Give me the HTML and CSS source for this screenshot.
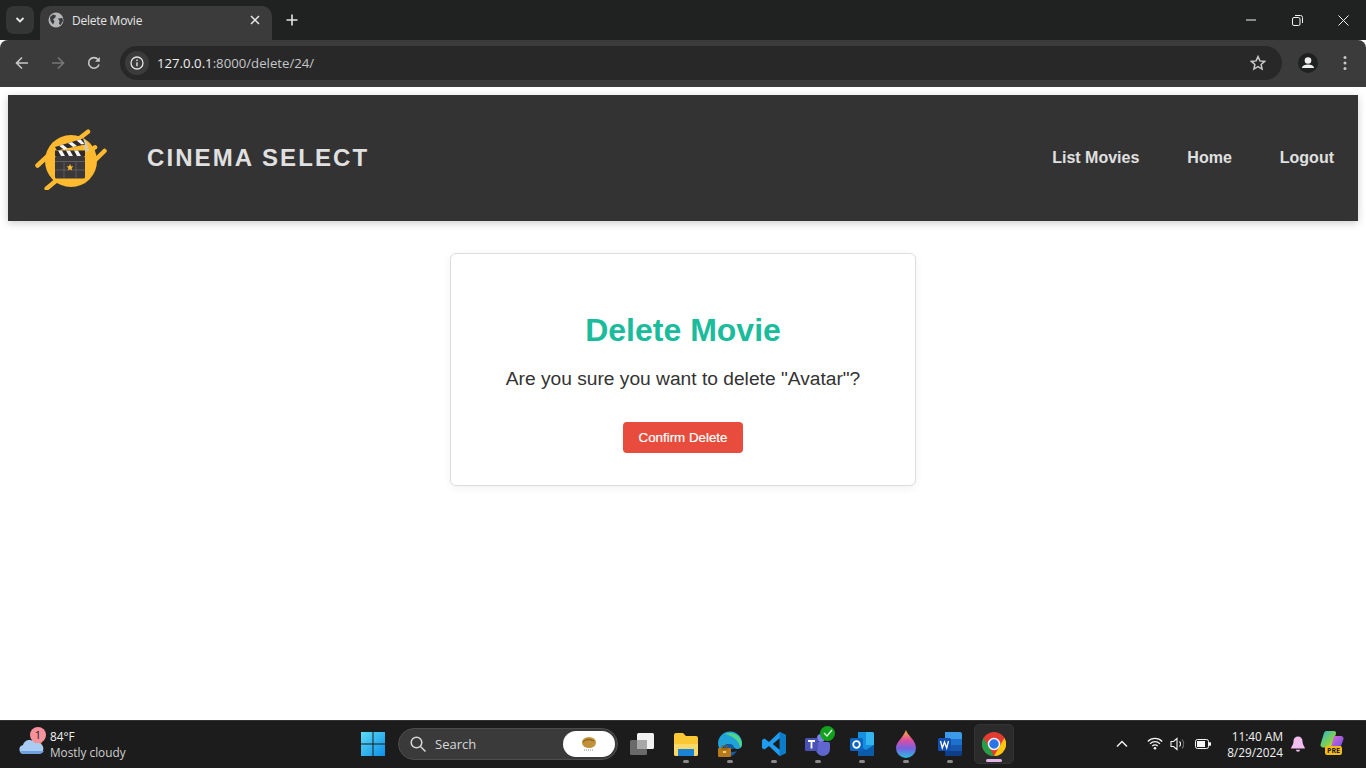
FILE: index.html
```html
<!DOCTYPE html>
<html lang="en">
<head>
<meta charset="utf-8">
<title>Delete Movie</title>
<link rel="stylesheet" href="styles.css">
</head>
<body>
<div class="tabstrip">
  <div class="tab-search"><svg width="10" height="6" viewBox="0 0 10 6"><path d="M1.500 1l3.500 3.500L8.500 1" fill="none" stroke="#e8e8e8" stroke-width="1.800"/></svg></div>
  <div class="tab">
    <svg class="favicon" width="16" height="16" viewBox="0 0 16 16"><circle cx="8" cy="8" r="7.500" fill="#b4b6b8"/><path d="M2 5l3-2.500 3 1-1 2.500-2 1 1.500 2.500L5 12.500 2.500 9zM10 6.500l4.500-.5.500 3-2.500 4-1.500-1 .5-3z" fill="#3b3b3b"/></svg>
    <span class="tab-title">Delete Movie</span>
    <svg class="tab-close" width="10" height="10" viewBox="0 0 10 10"><path d="M1 1l8 8M9 1l-8 8" stroke="#e8e8e8" stroke-width="1.500"/></svg>
  </div>
  <svg class="new-tab" width="12" height="12" viewBox="0 0 12 12"><path d="M6 .5v11M.5 6h11" stroke="#e4e4e4" stroke-width="1.600"/></svg>
  <div class="window-controls">
    <svg width="10" height="2" viewBox="0 0 10 2"><path d="M0 1h10" stroke="#f2f2f2"/></svg>
    <svg width="11" height="11" viewBox="0 0 11 11"><rect x=".5" y="2.500" width="7.500" height="8" rx="1.500" fill="none" stroke="#f2f2f2"/><path d="M3 .5h5.500a2 2 0 0 1 2 2V8" fill="none" stroke="#f2f2f2"/></svg>
    <svg width="11" height="11" viewBox="0 0 11 11"><path d="M.5.500l10 10M10.500.5l-10 10" stroke="#f2f2f2"/></svg>
  </div>
</div>
<div class="toolbar">
  <div class="nav-icons">
    <svg width="14" height="14" viewBox="0 0 14 14"><path d="M13 7H2M7 1.500L1.500 7 7 12.500" fill="none" stroke="#c8c8c8" stroke-width="1.600"/></svg>
    <svg width="14" height="14" viewBox="0 0 14 14"><path d="M1 7h11M7 1.500L12.500 7 7 12.500" fill="none" stroke="#777" stroke-width="1.600"/></svg>
    <svg width="14" height="14" viewBox="0 0 14 14"><path d="M12 8.500A5.300 5.300 0 1 1 11 3.500" fill="none" stroke="#c8c8c8" stroke-width="1.600"/><path d="M12.800 1v4.800H8z" fill="#c8c8c8"/></svg>
  </div>
  <div class="omnibox">
    <div class="site-info"><svg width="14" height="14" viewBox="0 0 14 14"><circle cx="7" cy="7" r="6" fill="none" stroke="#e3e3e3" stroke-width="1.300"/><path d="M7 6.200v4M7 3.600v1.400" stroke="#e3e3e3" stroke-width="1.400"/></svg></div>
    <div class="url"><span class="url-host">127.0.0.1</span>:8000/delete/24/</div>
    <svg class="star" width="16" height="16" viewBox="0 0 16 16"><path d="M8 1.600l1.900 4.300 4.700.5-3.500 3.100 1 4.600L8 11.700l-4.100 2.400 1-4.600L1.400 6.400l4.700-.5z" fill="none" stroke="#c8c8c8" stroke-width="1.500"/></svg>
  </div>
  <div class="profile"><svg width="20" height="20" viewBox="0 0 20 20"><circle cx="10" cy="10" r="10" fill="#1f2020"/><circle cx="10" cy="7.500" r="3.300" fill="#f0f0f0"/><path d="M3.800 15c.7-2.800 3.300-3.600 6.200-3.600s5.500.8 6.200 3.600z" fill="#f0f0f0"/></svg></div>
  <svg class="kebab" width="4" height="14" viewBox="0 0 4 14"><g fill="#c8c8c8"><circle cx="2" cy="1.500" r="1.500"/><circle cx="2" cy="7" r="1.500"/><circle cx="2" cy="12.500" r="1.500"/></g></svg>
</div>

<main class="viewport">
  <header class="site-header">
    <div class="brand">
      <svg class="logo" width="72" height="64" viewBox="0 0 72 64">
        <circle cx="36" cy="35" r="26" fill="#fdb92f"/>
        <g stroke="#fdb92f" stroke-width="4.500" stroke-linecap="round">
          <path d="M2.500 39.500L23 20.500M53 5.700L40 15.700M60 21.300L55 25M69.500 25L49 45M11.700 62.500L28 49"/>
        </g>
        <path d="M48 12.500l3.500 2.500 2.500 10-4 1z" fill="#d9c9a5"/>
        <rect x="20" y="30" width="30" height="22.500" rx="1.500" fill="#3a3838"/>
        <path d="M20 35.500h30" stroke="#5e5e5e" stroke-width="1"/>
        <path d="M29 36v16M41 36v16M20 44h30" stroke="#6a6a6a" stroke-width=".7"/>
        <path d="M20 24.500h30V30H20z" fill="#2d2b2b"/>
        <path d="M23 24.500l3 5.500h4l-3-5.500zM31 24.500l3 5.500h4l-3-5.500zM39 24.500l3 5.500h4l-3-5.500z" fill="#f4f4f4"/>
        <path d="M20 21l28-8.500 2 6-28 6z" fill="#2d2b2b"/>
        <path d="M24 19.800l5 3.900 4-.9-5-4zM33 17l5 3.900 4-.9-5-4zM41.500 14.500l5 3.900 3-.6-4-4.500z" fill="#f4f4f4"/>
        <path d="M35 38l1 2.300 2.500.2-1.900 1.600.6 2.400-2.200-1.300-2.200 1.300.6-2.400-1.900-1.600 2.500-.2z" fill="#fdb92f"/>
      </svg>
      <span class="brand-name">CINEMA SELECT</span>
    </div>
    <nav class="site-nav">
      <a href="#">List Movies</a>
      <a href="#">Home</a>
      <a href="#">Logout</a>
    </nav>
  </header>
  <section class="card">
    <h1>Delete Movie</h1>
    <p>Are you sure you want to delete "Avatar"?</p>
    <button type="button" class="danger">Confirm Delete</button>
  </section>
</main>

<footer class="taskbar">
  <div class="weather">
    <div class="weather-icon">
      <svg width="28" height="26" viewBox="0 0 28 26"><circle cx="19" cy="10" r="5" fill="#f08020"/><path d="M6 23a4.500 4.500 0 0 1-1-8.900A7 7 0 0 1 17.500 12a5.500 5.500 0 0 1 4 11z" fill="#a9cdf2"/><path d="M6 23a4.500 4.500 0 0 1-4-3h24a5.500 5.500 0 0 1-4.500 3z" fill="#6f9fdc"/></svg>
      <span class="badge">1</span>
    </div>
    <div class="weather-text"><div class="temp">84°F</div><div class="cond">Mostly cloudy</div></div>
  </div>
  <div class="task-center">
    <svg class="start" width="24" height="24" viewBox="0 0 24 24"><defs><linearGradient id="win" x1="0" y1="0" x2="1" y2="1"><stop offset="0" stop-color="#5fdcf5"/><stop offset="1" stop-color="#0a8fe8"/></linearGradient></defs><path d="M0 0h11.500v11.500H0zM12.500 0H24v11.500H12.500zM0 12.500h11.500V24H0zM12.500 12.500H24V24H12.500z" fill="url(#win)"/></svg>
    <div class="search">
      <svg width="16" height="16" viewBox="0 0 16 16"><circle cx="6.500" cy="6.500" r="5.300" fill="none" stroke="#d8d8d8" stroke-width="1.500"/><path d="M10.500 10.500l5 5" stroke="#d8d8d8" stroke-width="1.500"/></svg>
      <span class="search-label">Search</span>
      <div class="search-pill"><svg width="18" height="16" viewBox="0 0 18 16"><ellipse cx="9" cy="6.500" rx="7" ry="5.500" fill="#c0913a"/><path d="M3 6c3-3 7-3 11-1" stroke="#7a5518" fill="none"/><path d="M4 14h10" stroke="#888" stroke-dasharray="1 1"/></svg></div>
    </div>
    <div class="app"><svg width="24" height="22" viewBox="0 0 24 22"><rect x="0" y="7" width="17" height="15" rx="1.500" fill="#6a6a6a"/><rect x="7" y="0" width="17" height="16" rx="1.500" fill="#f1f1f1"/><rect x="7" y="7" width="10" height="9" fill="#a8a8a8"/></svg></div>
    <div class="app running"><svg width="26" height="24" viewBox="0 0 26 24"><path d="M1 3a2 2 0 0 1 2-2h7l3 3h10a2 2 0 0 1 2 2v16a2 2 0 0 1-2 2H3a2 2 0 0 1-2-2z" fill="#f9c833"/><path d="M1 12h24v10a2 2 0 0 1-2 2H3a2 2 0 0 1-2-2z" fill="#fbd968"/><path d="M5 17h16v7H5z" fill="#1a83d4"/></svg></div>
    <div class="app running"><svg width="26" height="26" viewBox="0 0 26 26"><path d="M1 12A12 12 0 0 1 25 13c0 3-2 5-5 5-4 0-3-5-8-5-5 0-8 4-6 9-3-2-5-6-5-10z" fill="#1fa3d8"/><path d="M8 3a12 12 0 0 1 17 10c0 2-1 3-2 4 0-6-6-12-15-14z" fill="#4fd68a"/><path d="M13 25c-4 0-7-2-7-6 0-4 3-6 6-6s5 2 5 5h-6c0 3 5 4 9 2-2 3-4 5-7 5z" fill="#0f5ca8"/><rect x="1" y="17" width="13" height="9" rx="1" fill="#b8791a"/><rect x="5" y="15" width="5" height="3" fill="none" stroke="#8a5a10"/><rect x="6" y="20" width="3" height="2" fill="#f5d27a"/></svg></div>
    <div class="app running"><svg width="24" height="24" viewBox="0 0 24 24"><path d="M17.500 0L24 3v18l-6.500 3L7 14l-4.500 3.500L0 16V8l2.500-1.500L7 10zM17.500 6.500L11 12l6.500 5.500z" fill="#1f9cf0"/><path d="M17.500 0L24 3v18l-6.500 3z" fill="#0a7cc8"/><path d="M17.500 6.500v11L11 12z" fill="#1c1c1c"/></svg></div>
    <div class="app running">
      <svg width="26" height="24" viewBox="0 0 26 24"><circle cx="16" cy="6" r="4" fill="#7b83eb"/><path d="M9 10h14a2 2 0 0 1 2 2v5a7 7 0 0 1-14 0z" fill="#5f66cf"/><rect x="0" y="6" width="13" height="13" rx="1.500" fill="#4b52b5"/><path d="M3 9h7M6.500 9v7.500" stroke="#fff" stroke-width="1.800"/></svg>
      <span class="check"><svg width="10" height="8" viewBox="0 0 10 8"><path d="M1 4l3 3 5-6" fill="none" stroke="#dff5df" stroke-width="1.400"/></svg></span>
    </div>
    <div class="app running"><svg width="24" height="24" viewBox="0 0 24 24"><path d="M8 0h14a2 2 0 0 1 2 2v20a2 2 0 0 1-2 2H8z" fill="#1490df"/><path d="M16 0h6a2 2 0 0 1 2 2v5h-8zM16 7h8v6h-8z" fill="#33b5f0"/><path d="M8 13l8 5 8-5v9a2 2 0 0 1-2 2H8z" fill="#0a5ca8"/><rect x="0" y="6" width="13" height="13" rx="1.500" fill="#0a64c2"/><circle cx="6.500" cy="12.500" r="3.300" fill="none" stroke="#fff" stroke-width="1.800"/></svg></div>
    <div class="app running"><svg width="22" height="28" viewBox="0 0 22 28"><defs><linearGradient id="drop" x1="0" y1="0" x2="0" y2="1"><stop offset="0" stop-color="#f7b733"/><stop offset=".35" stop-color="#e04f9e"/><stop offset=".65" stop-color="#7a5fe0"/><stop offset="1" stop-color="#27c0e0"/></linearGradient></defs><path d="M11 0c1 5 10 10 10 18a10 10 0 0 1-20 0C1 12 8 8 11 0z" fill="url(#drop)"/></svg></div>
    <div class="app running"><svg width="24" height="24" viewBox="0 0 24 24"><path d="M7 0h15a2 2 0 0 1 2 2v5H7z" fill="#3c9be8"/><path d="M7 7h17v6H7z" fill="#1f72cc"/><path d="M7 13h17v6H7z" fill="#1658ad"/><path d="M7 19h17v3a2 2 0 0 1-2 2H7z" fill="#0f3d87"/><rect x="0" y="6" width="13" height="13" rx="1.500" fill="#114fb0"/><path d="M2.500 9l1.800 7 2.200-6 2.200 6 1.800-7" fill="none" stroke="#fff" stroke-width="1.300"/></svg></div>
    <div class="app active"><svg width="24" height="24" viewBox="0 0 24 24"><circle cx="12" cy="12" r="12" fill="#e23c30"/><path d="M12 24A12 12 0 0 1 1.600 6l6 10.500z" fill="#21a04a"/><path d="M12 24l6.400-11 4-7A12 12 0 0 1 12 24z" fill="#fbc70c"/><circle cx="12" cy="12" r="5.500" fill="#2a75e8" stroke="#f4f4f4" stroke-width="1.500"/></svg></div>
  </div>
  <div class="tray">
    <svg class="tray-caret" width="12" height="8" viewBox="0 0 12 8"><path d="M1 6.500l5-5 5 5" fill="none" stroke="#f0f0f0" stroke-width="1.500"/></svg>
    <svg class="tray-wifi" width="16" height="13" viewBox="0 0 16 13"><g fill="none" stroke="#f4f4f4" stroke-width="1.200"><path d="M.8 4.500a10 10 0 0 1 14.400 0M3 6.800a7 7 0 0 1 10 0M5.300 9a3.700 3.700 0 0 1 5.400 0"/></g><circle cx="8" cy="11.300" r="1.300" fill="#f4f4f4"/></svg>
    <svg class="tray-vol" width="16" height="14" viewBox="0 0 16 14"><path d="M1 4.500h2.500L7 1.500v11l-3.500-3H1z" fill="none" stroke="#f4f4f4" stroke-width="1.100"/><path d="M9.500 4.500a3.500 3.500 0 0 1 0 5" fill="none" stroke="#f4f4f4" stroke-width="1.100"/><path d="M12 2.500a7 7 0 0 1 0 9" fill="none" stroke="#777" stroke-width="1.100"/></svg>
    <svg class="tray-batt" width="16" height="10" viewBox="0 0 16 10"><rect x=".5" y=".5" width="13" height="9" rx="2" fill="none" stroke="#f4f4f4"/><rect x="2" y="2" width="8" height="6" fill="#f4f4f4"/><rect x="14" y="3" width="2" height="4" rx="1" fill="#f4f4f4"/></svg>
    <div class="clock"><div>11:40 AM</div><div>8/29/2024</div></div>
    <svg class="tray-bell" width="14" height="16" viewBox="0 0 14 16"><path d="M7 .5a4.500 4.500 0 0 1 4.500 4.500c0 4 2.500 6 2.500 7.500H0C0 11 2.500 9 2.500 5A4.500 4.500 0 0 1 7 .5z" fill="#f3bdf0"/><path d="M5 13.800h4a2 2 0 0 1-4 0z" fill="#f3bdf0"/></svg>
    <div class="tray-copilot">
      <svg width="24" height="18" viewBox="0 0 24 18"><defs><linearGradient id="cpa" x1="0" y1="0" x2="1" y2="1"><stop offset="0" stop-color="#29b6d8"/><stop offset=".6" stop-color="#7fd14d"/><stop offset="1" stop-color="#f2d13a"/></linearGradient><linearGradient id="cpb" x1="0" y1="0" x2="1" y2="1"><stop offset="0" stop-color="#e06ad8"/><stop offset="1" stop-color="#6a4fe0"/></linearGradient></defs><path d="M7 0h7a2 2 0 0 1 2 2.500L12 15a2 2 0 0 1-2 1.500H3a2.500 2.500 0 0 1-2.500-3L4 2a3 3 0 0 1 3-2z" fill="url(#cpa)"/><path d="M14 5h7a2.500 2.500 0 0 1 2.500 3L21 15a2 2 0 0 1-2 1.500h-8z" fill="url(#cpb)"/></svg>
      <span class="pre">PRE</span>
    </div>
  </div>
</footer>
</body>
</html>
```
FILE: styles.css
```css
* { box-sizing: border-box; }
html, body { margin: 0; height: 100%; }
body {
  width: 1366px;
  height: 768px;
  overflow: hidden;
  display: flex;
  flex-direction: column;
  background: #fff;
  font-family: "Liberation Sans", Arial, sans-serif;
}
svg { display: block; flex: none; }

/* browser chrome */
.tabstrip {
  height: 40px;
  background: #202222;
  display: flex;
  align-items: flex-end;
  padding-left: 6px;
  font-family: "Open Sans", "Noto Sans", sans-serif;
}
.tab-search {
  width: 28px;
  height: 28px;
  margin: 0 6px 6px 0;
  border-radius: 8px;
  background: #343636;
  display: flex;
  align-items: center;
  justify-content: center;
}
.tab {
  width: 232px;
  height: 34px;
  background: #3b3b3b;
  border-radius: 10px 10px 0 0;
  display: flex;
  align-items: center;
  padding: 0 12px 6px 8px;
}
.tab-title {
  flex: 1;
  margin-left: 8px;
  font-size: 12px;
  color: #e4e4e4;
  letter-spacing: -.25px;
}
.new-tab { margin: 0 0 14px 14px; }
.window-controls {
  margin-left: auto;
  display: flex;
  align-items: center;
  gap: 35.5px;
  height: 40px;
  padding-right: 17px;
}
.toolbar {
  height: 47px;
  background: #3b3b3b;
  border-radius: 8px 8px 0 0;
  display: flex;
  align-items: center;
  padding: 0 19px 1px 15px;
  font-family: "Open Sans", "Noto Sans", sans-serif;
}
.nav-icons { display: flex; gap: 22px; width: 105px; }
.omnibox {
  width: 1162px;
  height: 34px;
  border-radius: 17px;
  background: #282828;
  display: flex;
  align-items: center;
  padding: 0 16px 0 5px;
}
.site-info {
  width: 24px;
  height: 24px;
  border-radius: 50%;
  background: #3b3b3b;
  display: flex;
  align-items: center;
  justify-content: center;
}
.url { flex: 1; margin-left: 8px; font-size: 13.2px; color: #c4c6c8; }
.url-host { color: #f0f0f0; }
.profile { margin-left: 16px; }
.kebab { margin-left: 25px; }

/* page */
.viewport { flex: 1; padding: 8px; background: #fff; }
.site-header {
  height: 126px;
  background: #333;
  display: flex;
  align-items: center;
  justify-content: space-between;
  padding: 0 24px 0 27px;
  box-shadow: 0 2px 8px rgba(0, 0, 0, .2);
}
.brand { display: flex; align-items: center; gap: 40px; }
.brand-name {
  font-size: 24px;
  font-weight: 700;
  letter-spacing: 2.08px;
  color: #e0e0e0;
}
.site-nav { display: flex; gap: 48px; }
.site-nav a {
  font-size: 16px;
  font-weight: 700;
  color: #e0e0e0;
  text-decoration: none;
}
.card {
  width: 466px;
  height: 233px;
  margin: 32px auto 0;
  padding: 58px 32px 32px;
  border: 1px solid #ddd;
  border-radius: 6px;
  background: #fff;
  box-shadow: 0 2px 8px rgba(0, 0, 0, .06);
  text-align: center;
}
.card h1 {
  margin: 0 0 18px;
  font-size: 32px;
  line-height: 37px;
  font-weight: 700;
  color: #1abc9c;
}
.card p {
  margin: 0 0 31px;
  font-size: 19.2px;
  line-height: 24px;
  color: #333;
}
.danger {
  border: 0;
  border-radius: 4px;
  padding: 8px 16px;
  background: #e74c3c;
  color: #fff;
  font-family: "Liberation Sans", Arial, sans-serif;
  font-size: 13.333px;
  font-weight: 400;
  -webkit-text-stroke: .2px #fff;
}

/* taskbar */
.taskbar {
  height: 48px;
  background: #1c1c1c;
  border-top: 1px solid #333;
  padding-bottom: 2px;
  display: flex;
  align-items: center;
  font-family: "Open Sans", "Noto Sans", sans-serif;
  color: #f2f2f2;
  font-size: 12px;
}
.weather { width: 361px; display: flex; align-items: center; padding-left: 18px; }
.weather-icon { position: relative; width: 28px; height: 26px; margin-right: 4px; }
.badge {
  position: absolute;
  left: 12px;
  top: -4px;
  width: 16px;
  height: 16px;
  border-radius: 50%;
  background: #f7929c;
  color: #1c1c1c;
  font-size: 11px;
  line-height: 16px;
  text-align: center;
}
.weather-text { line-height: 16px; font-size: 11.8px; }
.cond { color: #d0d0d0; }
.task-center { display: flex; align-items: center; width: 653px; }
.start { margin-right: 13px; margin-left: 0; }
.search {
  width: 220px;
  height: 32px;
  margin-right: 2px;
  border-radius: 16px;
  background: #3a3a3a;
  border: 1px solid #4c4c4c;
  display: flex;
  align-items: center;
  padding: 0 2px 0 11px;
}
.search-label { flex: 1; margin-left: 9px; font-size: 13px; color: #d8d8d8; }
.search-pill {
  width: 52px;
  height: 26px;
  border-radius: 13px;
  background: #fff;
  display: flex;
  align-items: center;
  justify-content: center;
}
.app {
  position: relative;
  width: 44px;
  height: 40px;
  display: flex;
  align-items: center;
  justify-content: center;
}
.running::after {
  content: "";
  position: absolute;
  left: 19px;
  bottom: 1px;
  width: 6px;
  height: 3px;
  border-radius: 2px;
  background: #8a8a8a;
}
.active { width: 40px; margin-left: 2px; border-radius: 5px; background: #2b2b2b; border: 1px solid #333; }
.active::after {
  content: "";
  position: absolute;
  left: 11px;
  bottom: 1px;
  width: 16px;
  height: 3px;
  border-radius: 2px;
  background: #e2b5e8;
}
.check {
  position: absolute;
  left: 24px;
  top: 2px;
  width: 15px;
  height: 15px;
  border-radius: 50%;
  background: #12a11c;
  display: flex;
  align-items: center;
  justify-content: center;
}
.tray { flex: 1; display: flex; align-items: center; padding-left: 102px; }
.tray-wifi { margin-left: 19px; }
.tray-vol { margin-left: 7px; }
.tray-batt { margin-left: 9px; }
.clock { width: 72px; margin-left: 0; text-align: right; line-height: 16px; font-size: 11.8px; }
.tray-bell { margin-left: 8px; }
.tray-copilot { position: relative; margin-left: 15px; width: 24px; height: 26px; }
.pre {
  position: absolute;
  left: 5px;
  top: 15px;
  padding: 0 2px;
  border-radius: 2px;
  background: #f5b91a;
  color: #1c1c1c;
  font-size: 7px;
  line-height: 9px;
  font-weight: 700;
}
```
